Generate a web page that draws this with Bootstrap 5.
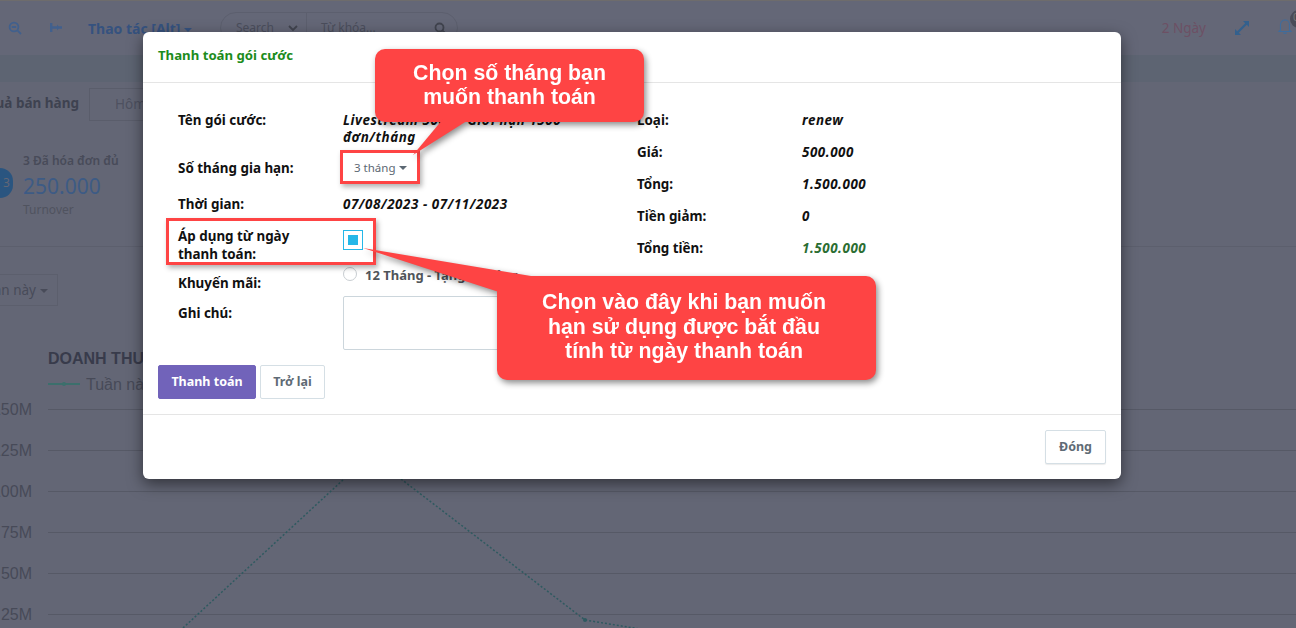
<!DOCTYPE html>
<html lang="vi">
<head>
<meta charset="utf-8">
<title>Thanh toán gói cước</title>
<link href="https://cdn.jsdelivr.net/npm/bootstrap@5.3.0/dist/css/bootstrap.min.css" rel="stylesheet">
<style>
html,body{height:628px;overflow:hidden}
body{background:#636675;font-family:"Noto Sans",sans-serif;position:relative;color:#3e4250}
.top-strip{height:55px;background:#646777;border-top:1px solid #6e6c6c;padding-left:8px}
.top-icon{display:block}
.icon-pin{margin-left:27px}
.action-menu{font-size:14px;font-weight:700;color:#35527f;margin-left:25px;width:132px}
.search-pill{width:238px;height:32px;border:1px solid #5c5f6e;border-radius:16px;font-size:12px;color:#4b4e5c}
.search-type{width:86px;padding-left:15px;border-right:1px solid #5c5f6e;height:100%}
.search-word{padding:0 10px 0 14px}
.days-left{font-size:13.500px;color:#6d5064;margin-right:29px}
.bell-wrap{position:relative;width:18px;margin-left:29px;height:30px}
.bell-badge{position:absolute;left:12px;top:-3px;width:22px;height:18px;border-radius:9px;background:#4a4c58;color:#777;font-size:10px;padding-left:3px}
.band{height:27px;background:#5d6472}
.sales-row{height:48px;padding-top:6px}
.clip-left{width:79px;height:30px;overflow:hidden;white-space:nowrap;font-size:13.500px;font-weight:700;color:#3e4250}
.today-box{margin-left:10px;width:120px;height:33px;border:1px solid #5a5d6b;font-size:13.500px;color:#4e5160;padding-left:25px}
.stat-row{height:117px;border-bottom:1px solid #5c5f6d;padding-top:23px}
.stat-dot{width:13px;height:30px;border-radius:0 15px 15px 0;background:#2a5580;margin-top:15px;margin-right:10px;color:#636675;font-size:12px}
.stat-name{font-size:12px;line-height:16px;font-weight:600;color:#484b59}
.stat-value{font-size:21px;line-height:34px;color:#3d5b85}
.stat-note{font-size:12px;line-height:14px;color:#50535f}
.week-box{margin-top:27px;width:58px;height:32px;border:1px solid #5c5f6d;border-left:0;font-size:13.500px;color:#484b59;overflow:hidden;white-space:nowrap;padding-right:9px}
.care{display:inline-block;width:0;height:0;border-left:4px solid transparent;border-right:4px solid transparent;border-top:4px solid currentColor;vertical-align:middle;margin-left:4px}
.chart-box{position:absolute;left:0;top:340px;display:block}
.chart-box text{font-family:"Liberation Sans",sans-serif;font-size:16px;fill:#474a58}
.chart-box .chart-title{font-weight:700;fill:#383b4b}
.pay-modal{position:absolute;left:143px;top:32px;width:978px;height:447px;border:0;border-radius:6px;box-shadow:0 5px 15px rgba(0,0,0,.5);font-size:13.400px;color:#111;overflow:hidden;background:#fff}
.pay-head{height:51px;padding:0 15px 2px;border-bottom:1px solid #e5e5e5;color:#1c8c1c;font-size:13.200px;font-weight:700}
.pay-body{height:331px;padding:21px 15px 0 35px}
.left-side{width:459px}
.right-side{width:300px}
.pay-line{display:flex;font-weight:700}
.pay-label{width:165px;flex:none}
.pay-value{width:240px;font-style:italic;line-height:17px;letter-spacing:.55px}
.line-a{height:48px;padding-top:8px;line-height:17px}
.line-b{height:33px;align-items:center}
.line-c{height:33px;padding-top:11px;line-height:17px}
.line-d{height:47px;padding-top:9px;line-height:18px}
.line-e{height:30px;padding-top:9px;line-height:18px}
.line-f{height:70px;padding-top:9px;line-height:18px}
.right-line{height:32px;padding-top:8px;line-height:17px;display:flex;font-weight:700}
.right-line .pay-label{width:165px}
.green-total{color:#2c6e32}
.month-pick{font-weight:400;font-style:normal;color:#5c6873;padding-left:11px;font-size:11.500px;letter-spacing:0;margin-top:-3px}
.tick-box{appearance:none;display:block;width:20px;height:20px;margin:3px 0 0;border:1px solid #25b7e8;background:#25b7e8;box-shadow:inset 0 0 0 4px #fff}
.round-box{appearance:none;display:block;width:14px;height:14px;border:1px solid #c9ced2;border-radius:50%;margin:-7px 8px 0 0;background:#fff;flex:none}
.promo-text{color:#50555a;font-size:13px;white-space:nowrap;margin-top:-8px}
.note-box{width:212px;height:54px;border:1px solid #ccd6dc;border-radius:2px;display:block;margin-top:-8px}
.pay-actions{margin-left:-20px}
.pay-btn{height:34px;font-size:12.500px;font-weight:700;border-radius:2px;padding:0 12px;display:inline-flex;align-items:center;justify-content:center}
.pay-go{width:98px;background:#7163ba;border:1px solid #7163ba;color:#fff}
.pay-back{width:65px;background:#fff;border:1px solid #d5dfe5;color:#5f6b75;margin-left:4px}
.pay-foot{height:65px;border-top:1px solid #e5e5e5;padding:15px 15px 0 0}
.pay-close{width:61px;background:#fff;border:1px solid #d5dfe5;box-shadow:0 1px 1px rgba(0,0,0,.08);color:#5f6b75}
.tip-shape{position:absolute;background:#fe4444;border-radius:10px;color:#fff;font-family:"Liberation Sans",sans-serif;font-weight:700;font-size:21.300px;text-align:center;filter:drop-shadow(2px 3px 3px rgba(0,0,0,.45))}
.tip-one{left:375px;top:49px;width:269px;height:73px;line-height:24px;padding-top:12px}
.tip-two{left:497px;top:276px;width:379px;height:104px;line-height:24.500px;padding:14px 5px 0 0}
.tip-tail{position:absolute;display:block;overflow:visible}
.tail-one{left:30px;top:70px}
.tail-two{left:-134px;top:-28px}
.tip-words{position:relative}
.mark-box{position:absolute;border:3px solid #fe4444;box-shadow:2px 3px 5px rgba(0,0,0,.3)}
.mark-one{left:340px;top:150px;width:80px;height:34px}
.mark-two{left:166px;top:218px;width:210px;height:47px}
</style>
</head>
<body>
<div class="top-strip d-flex align-items-center">
  <svg class="top-icon" width="14" height="14" viewBox="0 0 14 14" fill="none" stroke="#41608d" stroke-width="1.8"><circle cx="6" cy="6" r="4.4"/><path d="M9.4 9.4 13 13M3.8 6h4.4"/></svg>
  <svg class="top-icon icon-pin" width="14" height="12" viewBox="0 0 14 12" fill="#41608d"><path d="M1 1h2.4v3.2H8V2.4l1.6 1.8H13v2.6H9.6L8 8.6V6.8H3.4V10H1z"/></svg>
  <div class="action-menu">Thao tác [Alt]<span class="care"></span></div>
  <div class="search-pill d-flex align-items-center">
    <div class="search-type d-flex align-items-center justify-content-between pe-2"><span>Search</span><svg width="10" height="7" viewBox="0 0 10 7" fill="none" stroke="#41444f" stroke-width="1.8"><path d="M1 1l4 4 4-4"/></svg></div>
    <div class="search-word d-flex align-items-center justify-content-between flex-grow-1"><span>Từ khóa...</span><svg width="13" height="13" viewBox="0 0 13 13" fill="none" stroke="#41444f" stroke-width="1.8"><circle cx="5.5" cy="5.5" r="4"/><path d="M8.6 8.6 12 12"/></svg></div>
  </div>
  <div class="ms-auto d-flex align-items-center">
    <span class="days-left">2 Ngày</span>
    <svg width="14" height="14" viewBox="0 0 14 14" fill="#33608d"><path d="M8 0h6v6l-2.200-2.200L3.800 11.800 6 14H0V8l2.200 2.200 8-8z"/></svg>
    <div class="bell-wrap">
      <svg width="14" height="18" viewBox="0 0 14 18" fill="none" stroke="#3f6c9c" stroke-width="1.100" class="d-block mt-1"><path d="M2.500 13V7.500a4.500 4.500 0 0 1 9 0V13l1.500 1.500H1zM5.500 15.500a1.600 1.600 0 0 0 3 0"/></svg>
      <span class="bell-badge">0</span>
    </div>
  </div>
</div>
<div class="band"></div>
<div class="sales-row d-flex align-items-start">
  <div class="clip-left d-flex justify-content-end align-items-center"><span class="flex-shrink-0">Kết quả bán hàng</span></div>
  <div class="today-box d-flex align-items-center">Hôm nay</div>
</div>
<div class="stat-row d-flex">
  <div class="stat-dot d-flex align-items-center justify-content-center">3</div>
  <div>
    <div class="stat-name">3 Đã hóa đơn đủ</div>
    <div class="stat-value">250.000</div>
    <div class="stat-note">Turnover</div>
  </div>
</div>
<div class="week-box d-flex justify-content-end align-items-center"><span class="flex-shrink-0">Tuần này<span class="care"></span></span></div>

<svg class="chart-box" width="1296" height="288" viewBox="0 340 1296 288" role="img" aria-label="Biểu đồ doanh thu">
  <g stroke="#565966" stroke-width="1">
    <path d="M48 409.500H1296M48 450.500H1296M48 491.500H1296M48 532.500H1296M48 573.500H1296M48 614.500H1296"/>
  </g>
  <text class="chart-title" x="48" y="364">DOANH THU</text>
  <path d="M48 384H80" stroke="#3c6f6c" stroke-width="2"/>
  <circle cx="64" cy="384" r="2" fill="#3c6f6c"/>
  <text x="86" y="390">Tuần này</text>
  <g text-anchor="end">
    <text x="32" y="415">150M</text>
    <text x="32" y="456">125M</text>
    <text x="32" y="497">100M</text>
    <text x="32" y="538">75M</text>
    <text x="32" y="579">50M</text>
    <text x="32" y="620">25M</text>
  </g>
  <path d="M183 628 344 479 372 440 401 479 585 620 640 629" fill="none" stroke="#2f5a60" stroke-width="1.500" stroke-dasharray="2 2"/>
  <circle cx="585" cy="620" r="2" fill="#2f5a60"/>
</svg>

<div class="modal-content pay-modal">
  <div class="pay-head d-flex align-items-center">Thanh toán gói cước</div>
  <div class="pay-body">
    <div class="d-flex">
      <div class="left-side">
        <div class="pay-line line-a"><div class="pay-label">Tên gói cước:</div><div class="pay-value">Livestream 500k - Giới hạn 1500 đơn/tháng</div></div>
        <div class="pay-line line-b"><div class="pay-label">Số tháng gia hạn:</div><div class="pay-value month-pick">3 tháng<span class="care"></span></div></div>
        <div class="pay-line line-c"><div class="pay-label">Thời gian:</div><div class="pay-value">07/08/2023 - 07/11/2023</div></div>
        <div class="pay-line line-d"><div class="pay-label">Áp dụng từ ngày<br>thanh toán:</div><div class="pay-value"><input class="tick-box" type="checkbox" checked aria-label="Áp dụng từ ngày thanh toán"></div></div>
        <div class="pay-line line-e"><div class="pay-label">Khuyến mãi:</div><div class="d-flex align-items-start"><input class="round-box" type="radio" aria-label="Khuyến mãi"><span class="promo-text">12 Tháng - Tặng 2 tháng</span></div></div>
        <div class="pay-line line-f"><div class="pay-label">Ghi chú:</div><textarea class="note-box" aria-label="Ghi chú"></textarea></div>
        <div class="pay-actions d-flex"><button class="pay-btn pay-go" type="button">Thanh toán</button><button class="pay-btn pay-back" type="button">Trở lại</button></div>
      </div>
      <div class="right-side">
        <div class="right-line"><div class="pay-label">Loại:</div><div class="pay-value">renew</div></div>
        <div class="right-line"><div class="pay-label">Giá:</div><div class="pay-value">500.000</div></div>
        <div class="right-line"><div class="pay-label">Tổng:</div><div class="pay-value">1.500.000</div></div>
        <div class="right-line"><div class="pay-label">Tiền giảm:</div><div class="pay-value">0</div></div>
        <div class="right-line"><div class="pay-label">Tổng tiền:</div><div class="pay-value green-total">1.500.000</div></div>
      </div>
    </div>
  </div>
  <div class="pay-foot d-flex justify-content-end align-items-start"><button class="pay-btn pay-close" type="button">Đóng</button></div>
</div>

<div class="mark-box mark-one"></div>
<div class="mark-box mark-two"></div>

<div class="tip-shape tip-one">
  <svg class="tip-tail tail-one" width="70" height="40" viewBox="0 0 70 40"><path d="M38 0H65L8 36z" fill="#fe4444"/></svg>
  <div class="tip-words">Chọn số tháng bạn<br>muốn thanh toán</div>
</div>
<div class="tip-shape tip-two">
  <svg class="tip-tail tail-two" width="180" height="50" viewBox="0 0 180 50"><path d="M0 0 168 28 136 44z" fill="#fe4444"/></svg>
  <div class="tip-words">Chọn vào đây khi bạn muốn<br>hạn sử dụng được bắt đầu<br>tính từ ngày thanh toán</div>
</div>
<script src="https://cdn.jsdelivr.net/npm/bootstrap@5.3.0/dist/js/bootstrap.bundle.min.js"></script>
</body>
</html>
